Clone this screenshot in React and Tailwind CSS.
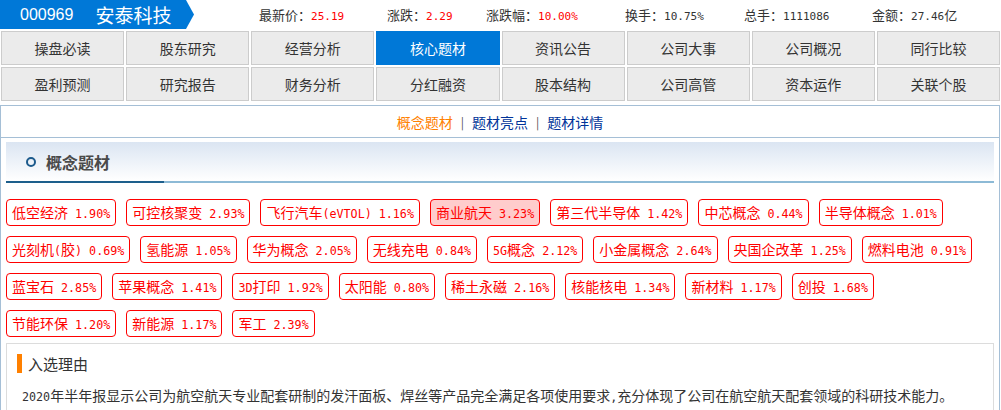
import React from "react"

const stats = [
    { label: "最新价：", value: "25.19", red: true, w: "w-[128px]" },
    { label: "涨跌：", value: "2.29", red: true, w: "w-[99px]" },
    { label: "涨跌幅：", value: "10.00%", red: true, w: "w-[139px]" },
    { label: "换手：", value: "10.75%", red: false, w: "w-[119px]" },
    { label: "总手：", value: "1111086", red: false, w: "w-[128px]" },
    { label: "金额：", value: "27.46亿", red: false, w: "w-auto" },
];

const navRows = [
    ["操盘必读", "股东研究", "经营分析", "核心题材", "资讯公告", "公司大事", "公司概况", "同行比较"],
    ["盈利预测", "研究报告", "财务分析", "分红融资", "股本结构", "公司高管", "资本运作", "关联个股"],
];

const tagRows = [
    ["低空经济 1.90%", "可控核聚变 2.93%", "飞行汽车(eVTOL) 1.16%", "商业航天 3.23%", "第三代半导体 1.42%", "中芯概念 0.44%", "半导体概念 1.01%"],
    ["光刻机(胶) 0.69%", "氢能源 1.05%", "华为概念 2.05%", "无线充电 0.84%", "5G概念 2.12%", "小金属概念 2.64%", "央国企改革 1.25%", "燃料电池 0.91%"],
    ["蓝宝石 2.85%", "苹果概念 1.41%", "3D打印 1.92%", "太阳能 0.80%", "稀土永磁 2.16%", "核能核电 1.34%", "新材料 1.17%", "创投 1.68%"],
    ["节能环保 1.20%", "新能源 1.17%", "军工 2.39%"],
];

// ascii runs get a narrow mono face so they sit at half the CJK width
function Mixed({ text, monoClass = "text-[11.7px]" }) {
    const parts = text.split(/([\x20-\x7e]+)/).filter(Boolean);
    return (
        <span className="whitespace-pre">
            {parts.map((p, i) =>
                /^[\x20-\x7e]+$/.test(p) ? (
                    <span key={i} className={`font-['DejaVu_Sans_Mono',monospace] ${monoClass}`}>{p}</span>
                ) : (
                    <span key={i}>{p}</span>
                )
            )}
        </span>
    );
}

function Header() {
    return (
        <div className="flex h-[29px] items-center">
            <div className="flex h-full w-[194px] items-center bg-[#0078d7] [clip-path:polygon(0_0,186px_0,194px_50%,186px_100%,0_100%)]">
                <span className="ml-[20px] font-['Liberation_Sans',sans-serif] text-[16px] leading-none text-white">000969</span>
                <span className="ml-[22px] text-[19px] leading-none text-white">安泰科技</span>
            </div>
            <div className="ml-[65px] flex items-center text-[13px] leading-none text-[#333]">
                {stats.map((s) => (
                    <div key={s.label} className={`flex items-center ${s.w}`}>
                        <span>{s.label}</span>
                        <span className={s.red ? "text-[#ff0000]" : "text-[#333]"}>
                            <Mixed text={s.value} monoClass="text-[11px]" />
                        </span>
                    </div>
                ))}
            </div>
        </div>
    );
}

function NavGrid() {
    return (
        <div className="mt-[2px] grid grid-cols-8 gap-[2px] px-[1px]">
            {navRows.flat().map((name) => {
                const active = name === "核心题材";
                return (
                    <div
                        key={name}
                        className={`flex h-[34px] items-center justify-center border text-[14px] leading-none ${
                            active ? "border-[#0078d7] bg-[#0078d7] text-white" : "border-[#cccccc] bg-[#ebebeb] text-[#333]"
                        }`}
                    >
                        {name}
                    </div>
                );
            })}
        </div>
    );
}

function Tag({ text }) {
    const hot = text.startsWith("商业航天");
    return (
        <div className={`flex h-[27px] items-center rounded-[4px] border border-[#ff0000] px-[5px] text-[14px] leading-none text-[#ff0000] ${hot ? "bg-[#ffcccc]" : "bg-white"}`}>
            <Mixed text={text} />
        </div>
    );
}

export default function App() {
    return (
        <div className="w-[1001px] bg-white font-['Noto_Sans_CJK_SC',sans-serif]">
            <Header />
            <NavGrid />

            <div className="mt-[4px] mr-[1px] border border-b-0 border-[#a5bfd6]">
                <div className="flex h-[32px] items-center justify-center border-b border-[#a5bfd6] text-[14px] leading-none">
                    <span className="text-[#ff8000]">概念题材</span>
                    <span className="mx-[8px] text-[12px] text-[#555]">|</span>
                    <span className="text-[#003399]">题材亮点</span>
                    <span className="mx-[8px] text-[12px] text-[#555]">|</span>
                    <span className="text-[#003399]">题材详情</span>
                </div>

                <div className="px-[5px] pt-[4px]">
                    <div className="flex h-[39px] items-center bg-gradient-to-b from-[#dbe5f2] to-white pl-[20px]">
                        <span className="h-[10px] w-[10px] rounded-full border-2 border-[#1c5a8c]"></span>
                        <span className="ml-[10px] text-[16px] leading-none font-bold text-[#4a4a4a]">概念题材</span>
                    </div>
                    <div className="flex h-[2px]">
                        <div className="w-[158px] bg-[#1d5f8c]"></div>
                        <div className="flex-1 bg-[#8dbad6]"></div>
                    </div>

                    <div className="flex flex-col gap-[10px] pt-[16px]">
                        {tagRows.map((row, i) => (
                            <div key={i} className="flex gap-[10px]">
                                {row.map((t) => (
                                    <Tag key={t} text={t} />
                                ))}
                            </div>
                        ))}
                    </div>

                    <div className="mt-[6px] border border-[#dcdcdc] pb-[20px]">
                        <div className="mt-[9px] ml-[10px] flex h-[20px] items-center">
                            <span className="h-[19px] w-[5px] bg-[#ff8000]"></span>
                            <span className="ml-[6px] text-[15px] leading-none text-[#333]">入选理由</span>
                        </div>
                        <p className="mt-[12px] px-[15px] text-[14px] leading-[20px] text-[#333]">
                            <Mixed text="2020年半年报显示公司为航空航天专业配套研制的发汗面板、焊丝等产品完全满足各项使用要求,充分体现了公司在航空航天配套领域的科研技术能力。" />
                        </p>
                    </div>
                </div>
            </div>
        </div>
    );
}
